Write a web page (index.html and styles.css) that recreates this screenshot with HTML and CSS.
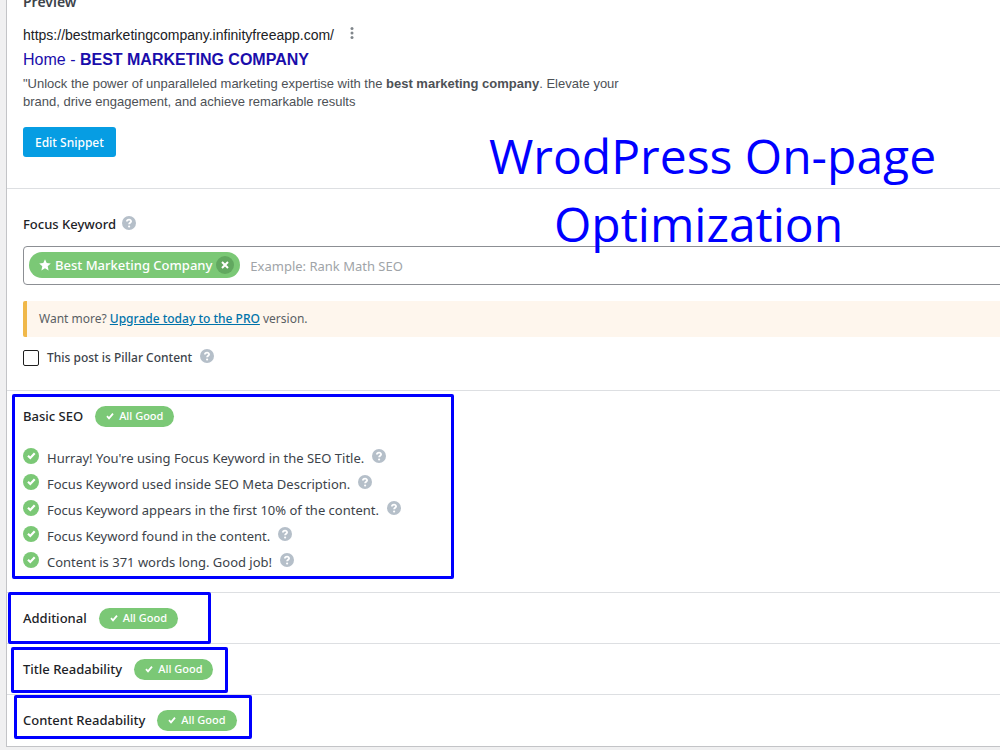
FILE: index.html
```
<!DOCTYPE html>
<html lang="en">

<head>
  <meta charset="UTF-8" />
  <meta name="viewport" content="width=device-width, initial-scale=1.0" />
  <title>WordPress On-page Optimization</title>
  <link rel="stylesheet" href="styles.css">
</head>

<body>
  <svg class="sprite" aria-hidden="true">
    <symbol id="help" viewBox="0 0 14 14">
      <circle cx="7" cy="7" r="7" fill="#b5bfc9" />
      <path d="M4.9 5.5C5 3.1 9.2 3.1 9.1 5.4C9 6.8 7.1 6.8 7.1 8.3" fill="none" stroke="#fff" stroke-width="1.8" />
      <circle cx="7.1" cy="10.5" r="1.1" fill="#fff" />
    </symbol>
    <symbol id="passed" viewBox="0 0 16 16">
      <circle cx="8" cy="8" r="8" fill="#7bc876" />
      <path d="M5 7.7L7.3 10L11.7 5.3" fill="none" stroke="#fff" stroke-width="2.2" />
    </symbol>
    <symbol id="tick" viewBox="0 0 8 8">
      <path d="M1 4.2L3 6.3L7 1.6" fill="none" stroke="#fff" stroke-width="1.8" />
    </symbol>
  </svg>

  <main class="metabox">
    <section class="section preview">
      <h2 class="title">Preview</h2>
      <div class="url-row">
        <a href="#" class="url">https://bestmarketingcompany.infinityfreeapp.com/</a>
        <button type="button" class="more" aria-label="More options">
          <svg width="4" height="12" viewBox="0 0 4 12" fill="#80868b">
            <circle cx="2" cy="1.6" r="1.5" />
            <circle cx="2" cy="6" r="1.5" />
            <circle cx="2" cy="10.4" r="1.5" />
          </svg>
        </button>
      </div>
      <a href="#" class="snippet-title">Home - <b>BEST MARKETING COMPANY</b></a>
      <p class="snippet-desc">"Unlock the power of unparalleled marketing expertise with the <b>best marketing company</b>. Elevate your brand, drive engagement, and achieve remarkable results</p>
      <button type="button" class="edit-btn">Edit Snippet</button>
      <div class="banner">WrodPress On-page<br><span>Optimization</span></div>
    </section>

    <section class="section focus">
      <div class="label-row">
        <label for="keyword" class="title">Focus Keyword</label>
        <svg class="help"><use href="#help" /></svg>
      </div>
      <div class="keyword-box">
        <span class="tag">
          <svg width="12" height="12" viewBox="0 0 12 12">
            <path d="M6 .3L7.7 4L11.8 4.4L8.7 7.2L9.6 11.4L6 9.2L2.4 11.4L3.3 7.2L.2 4.4L4.3 4Z" fill="#fff" />
          </svg>
          Best Marketing Company
          <button type="button" class="remove" aria-label="Remove keyword">
            <svg width="8" height="8" viewBox="0 0 8 8">
              <path d="M1 1L7 7M7 1L1 7" stroke="#fff" stroke-width="2" />
            </svg>
          </button>
        </span>
        <input type="text" id="keyword" placeholder="Example: Rank Math SEO" />
      </div>
      <p class="notice">Want more? <a href="#">Upgrade today to the PRO</a> version.</p>
      <div class="pillar">
        <input type="checkbox" id="pillar" />
        <label for="pillar">This post is Pillar Content</label>
        <svg class="help"><use href="#help" /></svg>
      </div>
    </section>

    <section class="section group">
      <h2><button type="button" class="toggle title">Basic SEO <span class="badge"><svg><use href="#tick" /></svg>All Good</span></button></h2>
      <ul class="checks">
        <li><svg class="passed"><use href="#passed" /></svg>Hurray! You're using Focus Keyword in the SEO Title.<svg class="help"><use href="#help" /></svg></li>
        <li><svg class="passed"><use href="#passed" /></svg>Focus Keyword used inside SEO Meta Description.<svg class="help"><use href="#help" /></svg></li>
        <li><svg class="passed"><use href="#passed" /></svg>Focus Keyword appears in the first 10% of the content.<svg class="help"><use href="#help" /></svg></li>
        <li><svg class="passed"><use href="#passed" /></svg>Focus Keyword found in the content.<svg class="help"><use href="#help" /></svg></li>
        <li><svg class="passed"><use href="#passed" /></svg>Content is 371 words long. Good job!<svg class="help"><use href="#help" /></svg></li>
      </ul>
      <div class="marker marker-basic"></div>
    </section>

    <section class="section group">
      <h2><button type="button" class="toggle title">Additional <span class="badge"><svg><use href="#tick" /></svg>All Good</span></button></h2>
      <div class="marker marker-additional"></div>
    </section>

    <section class="section group">
      <h2><button type="button" class="toggle title">Title Readability <span class="badge"><svg><use href="#tick" /></svg>All Good</span></button></h2>
      <div class="marker marker-title"></div>
    </section>

    <section class="section group">
      <h2><button type="button" class="toggle title">Content Readability <span class="badge"><svg><use href="#tick" /></svg>All Good</span></button></h2>
      <div class="marker marker-content"></div>
    </section>
  </main>
</body>

</html>
```
FILE: styles.css
```
:root {
  --green: #7bc876;
  --blue: #069de3;
  --line: #dddfe2;
  --marker: #0000ff;
}

* {
  box-sizing: border-box;
}

body {
  margin: 0;
  overflow: hidden;
  font-family: "Noto Sans", sans-serif;
  font-size: 13px;
  line-height: 20px;
  color: #3c434a;
  background: #f0f0f1;
}

h2,
p,
ul {
  margin: 0;
  padding: 0;
}

button {
  padding: 0;
  border: none;
  background: none;
  font-family: inherit;
  cursor: pointer;
}

svg {
  display: block;
  flex: none;
}

.sprite {
  position: absolute;
  width: 0;
  height: 0;
}

/* the box runs on past the right edge of the window */
.metabox {
  margin: -9px -24px 0 6px;
  background: #fff;
  border: 1px solid #c3c4c7;
}

.section {
  position: relative;
  padding: 0 16px;
  border-bottom: 1px solid var(--line);
}

.title {
  font-size: 13px;
  font-weight: 500;
  line-height: 20px;
  color: #1d2327;
}

.help {
  width: 14px;
  height: 14px;
}

/* preview */
.preview {
  padding-bottom: 31px;
  font-family: "Liberation Sans", Arial, sans-serif;
}

.preview .title {
  font-family: "Noto Sans", sans-serif;
  font-size: 14px;
  font-weight: 600;
  color: #3c434a;
}

.url-row {
  display: flex;
  align-items: center;
  gap: 16px;
  margin-top: 12px;
}

.url {
  font-size: 14px;
  line-height: 22px;
  color: #202124;
  text-decoration: none;
}

.more {
  margin-bottom: 4px;
}

.snippet-title {
  display: block;
  margin-top: 2px;
  font-size: 16px;
  line-height: 24px;
  color: #1a0dab;
  text-decoration: none;
}

.snippet-desc {
  max-width: 600px;
  margin-top: 3px;
  font-size: 13px;
  line-height: 18px;
  color: #4d5156;
}

.edit-btn {
  display: block;
  height: 30px;
  margin-top: 16px;
  padding: 0 12px;
  border-radius: 3px;
  background: var(--blue);
  color: #fff;
  font-family: "Noto Sans", sans-serif;
  font-size: 12px;
  font-weight: 500;
}

.banner {
  position: absolute;
  top: 130px;
  left: 482px;
  z-index: 1;
  font-family: "Open Sans", sans-serif;
  font-size: 48px;
  line-height: 68px;
  text-align: center;
  white-space: nowrap;
  color: var(--marker);
}

.banner span {
  padding-right: 28px;
}

/* focus keyword */
.focus {
  padding-top: 25px;
  padding-bottom: 22px;
}

.label-row {
  display: flex;
  align-items: center;
  gap: 6px;
}

.label-row .help {
  margin-bottom: 2px;
}

.keyword-box {
  display: flex;
  gap: 10px;
  height: 39px;
  margin-top: 12px;
  padding: 5px;
  border: 1px solid #8c8f94;
  border-radius: 4px;
}

.tag {
  display: flex;
  align-items: center;
  gap: 4px;
  height: 26px;
  padding: 0 6px 0 10px;
  border-radius: 13px;
  background: var(--green);
  color: #fff;
  font-weight: 500;
  white-space: nowrap;
}

.remove {
  display: flex;
  align-items: center;
  justify-content: center;
  width: 18px;
  height: 18px;
  border-radius: 50%;
  background: #62a860;
}

.keyword-box input {
  flex: 1;
  padding: 0;
  border: none;
  outline: none;
  font-family: inherit;
  font-size: 13px;
}

.keyword-box input::placeholder {
  color: #a0a4a8;
}

.notice {
  margin-top: 16px;
  padding: 8px 12px;
  border-left: 4px solid #f0b849;
  border-radius: 2px;
  background: #fef6ed;
  color: #5a5f64;
  font-size: 12px;
}

.notice a {
  color: #0073aa;
  font-weight: 500;
}

.pillar {
  display: flex;
  align-items: center;
  gap: 8px;
  margin-top: 11px;
  font-size: 12px;
  font-weight: 500;
}

.pillar .help {
  margin-bottom: 4px;
}

.pillar input {
  appearance: none;
  width: 16px;
  height: 16px;
  margin: 0;
  border: 1px solid #1e1e1e;
  border-radius: 2px;
  background: #fff;
}

/* test groups */
.group {
  padding-top: 14px;
  padding-bottom: 14px;
}

.group:last-child {
  padding-bottom: 15px;
  border-bottom: none;
}

.toggle {
  display: flex;
  align-items: center;
  gap: 12px;
  height: 22px;
}

.badge {
  display: flex;
  align-items: center;
  gap: 5px;
  height: 21px;
  padding: 0 11px;
  border-radius: 11px;
  background: var(--green);
  color: #fff;
  font-size: 11px;
}

.badge svg {
  width: 8px;
  height: 8px;
}

.checks {
  margin-top: 18px;
  padding-bottom: 3px;
  list-style: none;
}

.checks li {
  display: flex;
  align-items: center;
  gap: 8px;
  height: 26px;
}

.checks svg {
  margin-bottom: 4px;
}

.passed {
  width: 16px;
  height: 16px;
}

/* highlight frames drawn over the groups */
.marker {
  position: absolute;
  border: 3px solid var(--marker);
  border-radius: 2px;
  pointer-events: none;
}

.marker-basic {
  top: 3px;
  left: 5px;
  width: 442px;
  height: 185px;
}

.marker-additional {
  top: -1px;
  left: 1px;
  width: 203px;
  height: 52px;
}

.marker-title {
  top: 3px;
  left: 4px;
  width: 217px;
  height: 46px;
}

.marker-content {
  top: 0;
  left: 7px;
  width: 238px;
  height: 44px;
}
```
